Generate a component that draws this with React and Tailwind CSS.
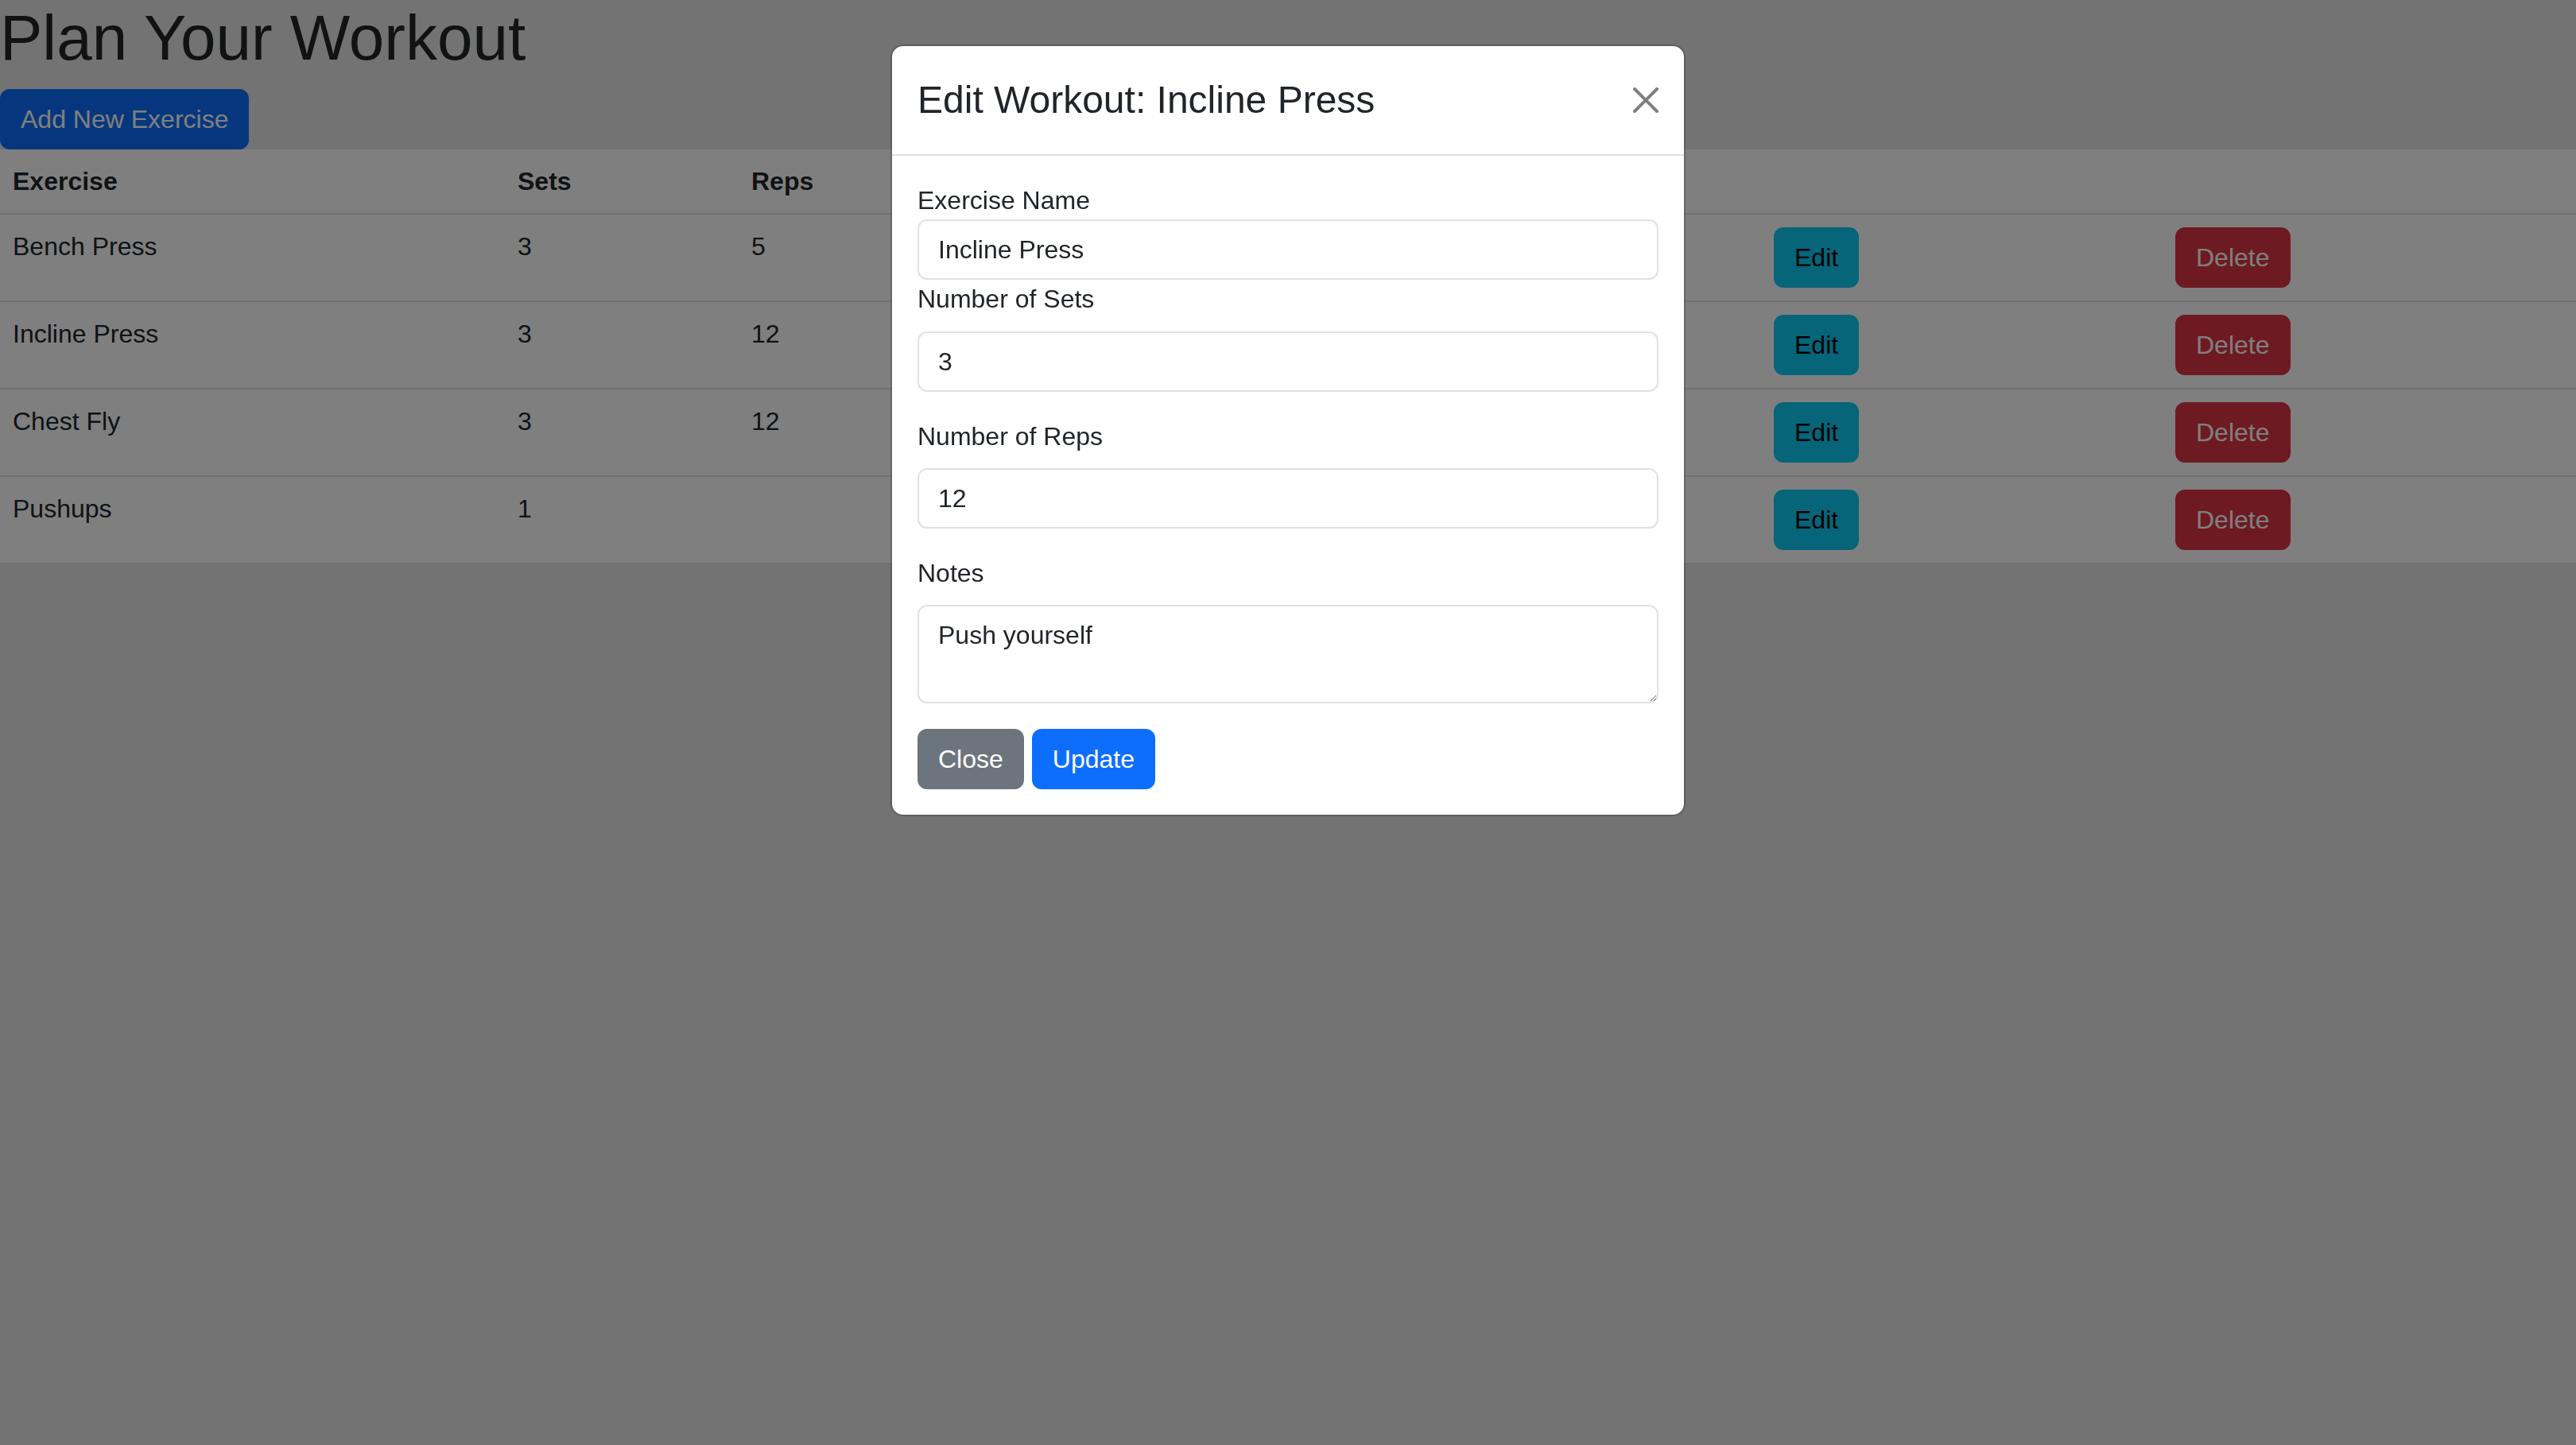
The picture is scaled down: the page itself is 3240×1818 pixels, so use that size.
import { useState } from "react";

const workouts = [
  { name: "Bench Press", sets: "3", reps: "5", notes: "" },
  { name: "Incline Press", sets: "3", reps: "12", notes: "Push yourself" },
  { name: "Chest Fly", sets: "3", reps: "12", notes: "" },
  { name: "Pushups", sets: "1", reps: "", notes: "" },
];

function CloseIcon() {
  return (
    <svg width="32" height="32" viewBox="0 0 16 16" fill="#000" fillOpacity="0.5">
      <path d="M.293.293a1 1 0 0 1 1.414 0L8 6.586 14.293.293a1 1 0 1 1 1.414 1.414L9.414 8l6.293 6.293a1 1 0 0 1-1.414 1.414L8 9.414l-6.293 6.293a1 1 0 0 1-1.414-1.414L6.586 8 .293 1.707a1 1 0 0 1 0-1.414z" />
    </svg>
  );
}

export default function App() {
  const [name, setName] = useState("Incline Press");
  const [sets, setSets] = useState("3");
  const [reps, setReps] = useState("12");
  const [notes, setNotes] = useState("Push yourself");

  return (
    <div className="min-h-screen bg-[#e6e6e6] text-[#212529] font-['Liberation_Sans',Arial,sans-serif]">
      <h1 className="text-[80px] leading-[1.2] font-medium mb-[16px]">Plan Your Workout</h1>
      <button className="block h-[76px] px-[24px] border-2 border-[#0d6efd] bg-[#0d6efd] text-white text-[32px] leading-[48px] rounded-[12px]">
        Add New Exercise
      </button>

      {/* Table */}
      <table className="w-full table-fixed bg-white text-[32px] leading-[48px]">
        <colgroup>
          <col className="w-[635px]" />
          <col className="w-[294px]" />
          <col className="w-[450px]" />
          <col className="w-[836px]" />
          <col className="w-[505px]" />
          <col className="w-[520px]" />
        </colgroup>
        <thead>
          <tr className="border-b-2 border-[#dee2e6]">
            <th className="text-left font-bold p-[16px]">Exercise</th>
            <th className="text-left font-bold p-[16px]">Sets</th>
            <th className="text-left font-bold p-[16px]">Reps</th>
            <th className="text-left font-bold p-[16px]">Notes</th>
            <th className="p-[16px]"></th>
            <th className="p-[16px]"></th>
          </tr>
        </thead>
        <tbody>
          {workouts.map((w) => (
            <tr key={w.name} className="border-b-2 border-[#dee2e6] align-top">
              <td className="p-[16px]">{w.name}</td>
              <td className="p-[16px]">{w.sets}</td>
              <td className="p-[16px]">{w.reps}</td>
              <td className="p-[16px]">{w.notes}</td>
              <td className="p-[16px]">
                <button className="h-[76px] px-[24px] border-2 border-[#0dcaf0] bg-[#0dcaf0] text-black rounded-[12px]">
                  Edit
                </button>
              </td>
              <td className="p-[16px]">
                <button className="h-[76px] px-[24px] border-2 border-[#dc3545] bg-[#dc3545] text-white rounded-[12px]">
                  Delete
                </button>
              </td>
            </tr>
          ))}
        </tbody>
      </table>

      {/* Backdrop */}
      <div className="fixed inset-0 bg-black/50" />

      {/* Modal */}
      <div className="fixed inset-0 flex justify-center items-start pt-[56px]">
        <div className="w-[1000px] bg-white bg-clip-padding border-2 border-black/[.175] rounded-[16px] text-[32px] leading-[48px]">
          <div className="flex items-center justify-between p-[32px] border-b-2 border-[#dee2e6]">
            <div className="text-[48px] leading-[72px] font-medium">Edit Workout: Incline Press</div>
            <button className="p-[8px] -mr-[8px] rounded-[12px]">
              <CloseIcon />
            </button>
          </div>
          <div className="p-[32px]">
            <label className="block">Exercise Name</label>
            <input
              value={name}
              onChange={(e) => setName(e.target.value)}
              className="block w-full h-[76px] px-[24px] border-2 border-[#dee2e6] rounded-[12px] text-[#212529] outline-none"
            />
            <label className="block mb-[17px]">Number of Sets</label>
            <input
              value={sets}
              onChange={(e) => setSets(e.target.value)}
              className="block w-full h-[76px] px-[24px] border-2 border-[#dee2e6] rounded-[12px] mb-[32px] outline-none"
            />
            <label className="block mb-[16px]">Number of Reps</label>
            <input
              value={reps}
              onChange={(e) => setReps(e.target.value)}
              className="block w-full h-[76px] px-[24px] border-2 border-[#dee2e6] rounded-[12px] mb-[32px] outline-none"
            />
            <label className="block mb-[16px]">Notes</label>
            <textarea
              value={notes}
              onChange={(e) => setNotes(e.target.value)}
              rows={2}
              className="block w-full h-[124px] px-[24px] py-[12px] border-2 border-[#dee2e6] rounded-[12px] mb-[32px] resize-y outline-none"
            />
            <div className="flex gap-[10px]">
              <button className="h-[76px] px-[24px] border-2 border-[#6c757d] bg-[#6c757d] text-white rounded-[12px]">
                Close
              </button>
              <button className="h-[76px] px-[24px] border-2 border-[#0d6efd] bg-[#0d6efd] text-white rounded-[12px]">
                Update
              </button>
            </div>
          </div>
        </div>
      </div>
    </div>
  );
}
